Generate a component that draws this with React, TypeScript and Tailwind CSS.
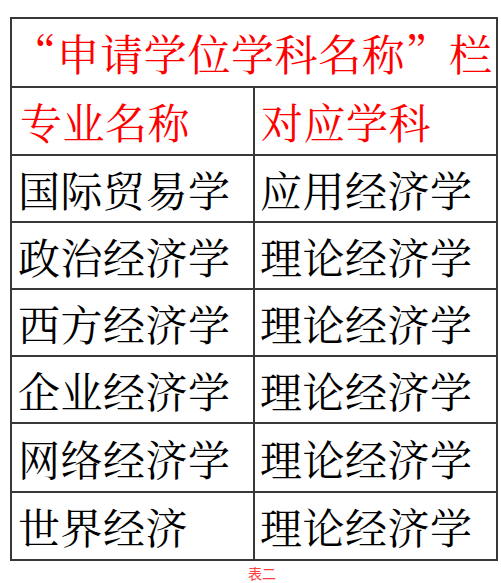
import React from 'react';

const rows: [string, string, string][] = [
  ['国际贸易学', '应用经济学', 'h-[67px]'],
  ['政治经济学', '理论经济学', 'h-[67px]'],
  ['西方经济学', '理论经济学', 'h-[67px]'],
  ['企业经济学', '理论经济学', 'h-[67px]'],
  ['网络经济学', '理论经济学', 'h-[69px]'],
  ['世界经济', '理论经济学', 'h-[68px]'],
];

const font = { fontFamily: '"Noto Serif CJK SC", "Noto Sans CJK SC", "Liberation Serif", serif' };

export default function App() {
  return (
    <div className="w-[501px] h-[583px] bg-white overflow-hidden flex flex-col">
      <div className="pt-[17px] pl-[10px]">
        <table className="table-fixed border-collapse w-[486px]" style={font}>
          <colgroup>
            <col className="w-[243px]" />
            <col className="w-[243px]" />
          </colgroup>
          <tbody>
            <tr className="h-[69px]">
              <td colSpan={2} className="border-2 border-[#383838] p-0">
                <div className="whitespace-nowrap text-[43px] leading-none tracking-[0.6px] text-[#ff0000] pl-[1px]">
                  “申请学位学科名称”栏
                </div>
              </td>
            </tr>
            <tr className="h-[68px]">
              <td className="border-2 border-[#383838] pl-[8px] text-[42px] leading-none tracking-[0.5px] text-[#ff0000]">专业名称</td>
              <td className="border-2 border-[#383838] pl-[6px] text-[42px] leading-none tracking-[0.5px] text-[#ff0000]">对应学科</td>
            </tr>
            {rows.map(([a, b, h]) => (
              <tr key={a} className={h}>
                <td className="border-2 border-[#383838] pl-[6px] text-[42px] leading-none tracking-[0.5px] text-black">{a}</td>
                <td className="border-2 border-[#383838] pl-[5px] text-[42px] leading-none tracking-[0.5px] text-black">{b}</td>
              </tr>
            ))}
          </tbody>
        </table>
      </div>
      <div className="flex-1 flex items-center pl-[248px] pt-[2px] text-[14px] text-[#ff4040]" style={{ fontFamily: '"Noto Sans CJK SC", sans-serif' }}>
        表二
      </div>
      <div className="h-[3px] bg-[#d4d4d4]" />
    </div>
  );
}
